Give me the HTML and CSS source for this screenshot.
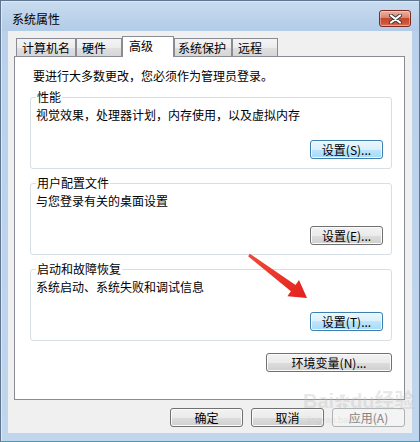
FILE: index.html
```html
<!DOCTYPE html>
<html lang="zh-CN">
<head>
<meta charset="utf-8">
<title>系统属性</title>
<link rel="stylesheet" href="styles.css">
</head>
<body>
<div class="window">
  <div class="titlebar">
    <span class="title">系统属性</span>
    <div class="close">
      <svg width="13" height="10" viewBox="0 0 13 10">
        <path d="M2 1.5 L11 8.5 M11 1.5 L2 8.5" stroke="#3a3a3a" stroke-width="4" stroke-linecap="round"/>
        <path d="M2 1.5 L11 8.5 M11 1.5 L2 8.5" stroke="#ffffff" stroke-width="2.2" stroke-linecap="round"/>
      </svg>
    </div>
  </div>
  <div class="client">
    <div class="tabs">
      <div class="tab t1">计算机名</div>
      <div class="tab t2">硬件</div>
      <div class="tab sel">高级</div>
      <div class="tab t4">系统保护</div>
      <div class="tab t5">远程</div>
    </div>
    <div class="panel">
      <p class="intro">要进行大多数更改，您必须作为管理员登录。</p>
      <fieldset class="group">
        <legend>性能</legend>
        <div class="desc">视觉效果，处理器计划，内存使用，以及虚拟内存</div>
        <div class="btnrow"><button class="btn hot">设置(S)...</button></div>
      </fieldset>
      <fieldset class="group">
        <legend>用户配置文件</legend>
        <div class="desc">与您登录有关的桌面设置</div>
        <div class="btnrow"><button class="btn">设置(E)...</button></div>
      </fieldset>
      <fieldset class="group">
        <legend>启动和故障恢复</legend>
        <div class="desc">系统启动、系统失败和调试信息</div>
        <div class="btnrow"><button class="btn hot">设置(T)...</button></div>
      </fieldset>
      <div class="envrow"><button class="btn env">环境变量(N)...</button></div>
    </div>
    <div class="footer">
      <button class="btn">确定</button>
      <button class="btn">取消</button>
      <button class="btn disabled">应用(A)</button>
    </div>
  </div>
  <svg class="arrow" width="420" height="442" viewBox="0 0 420 442">
    <defs>
      <linearGradient id="ag" x1="0" y1="0" x2="1" y2="1">
        <stop offset="0" stop-color="#f04a3a"/>
        <stop offset="1" stop-color="#e3221c"/>
      </linearGradient>
    </defs>
    <polygon points="249.9,253.8 295.5,284.9 299,280 307,298 287.4,296.2 290.9,291.3 248.1,256.2" fill="url(#ag)"/>
  </svg>
  <div class="watermark">
    <span class="wm-big">Bai<span class="paw">✿</span>du经验</span>
    <span class="wm-small">jingyan.baidu.com</span>
  </div>
</div>
</body>
</html>
```
FILE: styles.css
```css
* { box-sizing: border-box; }

body {
  margin: 0;
  font-family: "Noto Sans CJK SC", "Liberation Sans", sans-serif;
  font-size: 12px;
  color: #000;
}

.window {
  position: relative;
  width: 420px;
  height: 442px;
  border: 1px solid #5f7590;
  border-bottom-color: #2aa6cc;
  background: linear-gradient(#c9dcf0 0, #b2cbe7 30px, #b9d1ea 30px, #bfd6ed 100%);
  box-shadow: inset 1px 1px 0 #dbe8f5;
  padding: 0 7px 8px;
  display: flex;
  flex-direction: column;
}

.titlebar {
  height: 30px;
  margin: 0 -7px;
  padding: 0 8px 0 11px;
  display: flex;
  justify-content: space-between;
  align-items: flex-start;
  flex: none;
}

.title {
  margin-top: 11px;
  line-height: 14px;
  color: #000;
}

.close {
  margin-top: 9px;
  width: 32px;
  height: 17px;
  border: 1px solid #7c2b1e;
  border-radius: 3px;
  background: linear-gradient(#eab1a2, #d98470 45%, #c6482c 50%, #cc5a3c 85%, #d9805f 100%);
  box-shadow: inset 0 0 0 1px rgba(255, 255, 255, 0.35);
  display: flex;
  align-items: center;
  justify-content: center;
}

.close svg { display: block; }

.client {
  flex: none;
  height: 402px;
  background: #f0f0f0;
  padding: 5px 7px 0 6px;
  display: flex;
  flex-direction: column;
}

.tabs {
  display: flex;
  align-items: flex-end;
  height: 20px;
  padding-left: 2px;
  flex: none;
}

.tab {
  height: 18px;
  border: 1px solid #898c95;
  border-bottom: none;
  background: linear-gradient(#f4f4f4, #ececec 50%, #e0e0e0 50%, #d6d6d6);
  line-height: 14px;
  padding: 2px 0 0 5px;
  white-space: nowrap;
}

.t1 { width: 60px; }
.t2 { width: 46px; }
.t4 { width: 58px; padding-left: 3px; }
.t5 { width: 46px; }

.tab.sel {
  position: relative;
  z-index: 1;
  width: 52px;
  height: 21px;
  margin-bottom: -1px;
  background: #fff;
  padding: 2px 0 0 6px;
}

.panel {
  flex: none;
  height: 344px;
  border: 1px solid #898c95;
  background: #fff;
  padding: 12px 12px 0 15px;
}

.intro {
  margin: 0 0 0 3px;
  line-height: 14px;
}

.group {
  margin: 7px 0 0;
  border: 1px solid #d5dfe5;
  border-radius: 3px;
  padding: 4px 8px 9px 5px;
  min-width: 0;
}

.group legend {
  padding: 0 1px;
  line-height: 14px;
}

.desc { line-height: 14px; }

.btnrow {
  display: flex;
  justify-content: flex-end;
  margin-top: 18px;
}

.btn {
  width: 73px;
  height: 19px;
  padding: 0;
  border: 1px solid #707070;
  border-radius: 3px;
  background: linear-gradient(#f2f2f2, #ebebeb 50%, #dddddd 50%, #cfcfcf);
  box-shadow: inset 0 0 0 1px #fbfbfb;
  font-family: "Noto Sans CJK SC", "Liberation Sans", sans-serif;
  font-size: 12px;
  line-height: 16px;
  color: #000;
  text-align: center;
  white-space: nowrap;
}

.btn.hot {
  border-color: #3c7fb1;
  background: linear-gradient(#eaf6fd, #d9f0fc 50%, #bee6fd 50%, #a7d9f5);
  box-shadow: inset 0 0 0 1px #f4fbff;
}

.btn.disabled {
  border-color: #adb2b5;
  background: #f4f4f4;
  box-shadow: none;
  color: #838383;
}

.envrow {
  display: flex;
  justify-content: flex-end;
  margin-top: 12px;
}

.btn.env { width: 126px; }

.footer {
  display: flex;
  justify-content: flex-end;
  gap: 8px;
  margin-top: 8px;
}

.arrow {
  position: absolute;
  left: -1px;
  top: -1px;
  pointer-events: none;
}

.watermark {
  position: absolute;
  left: 302px;
  top: 388px;
  display: flex;
  flex-direction: column;
  pointer-events: none;
  color: rgba(190, 190, 190, 0.35);
  font-family: "Liberation Sans", "Noto Sans CJK SC", sans-serif;
}

.wm-big {
  font-size: 20px;
  font-weight: bold;
  line-height: 24px;
}

.paw { font-size: 16px; }

.wm-small {
  font-size: 9px;
  line-height: 10px;
  margin-left: 4px;
}
```
